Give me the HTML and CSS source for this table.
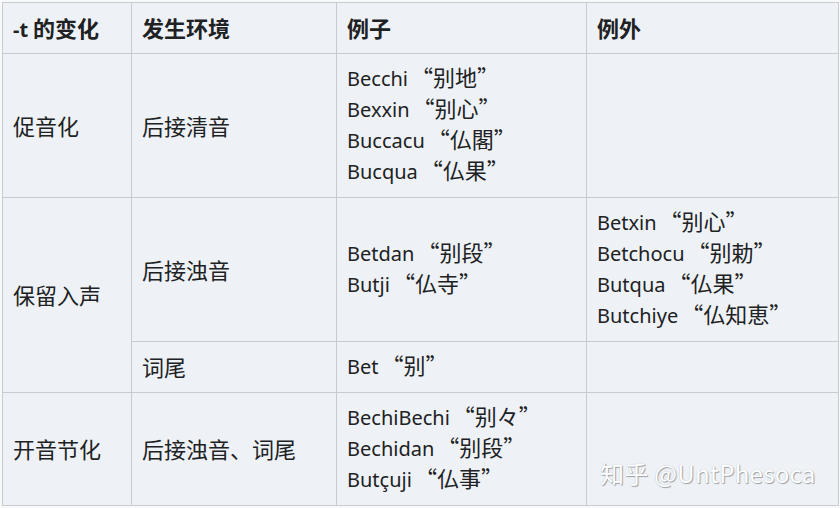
FILE: index.html
```html
<!DOCTYPE html>
<html lang="zh-CN">
<head>
<meta charset="utf-8">
<link rel="stylesheet" href="styles.css">
</head>
<body>
<div class="page">
<table class="tbl">
<colgroup>
<col class="c1"><col class="c2"><col class="c3"><col class="c4">
</colgroup>
<thead>
<tr><th><span class="lat">-t</span> 的变化</th><th>发生环境</th><th>例子</th><th>例外</th></tr>
</thead>
<tbody>
<tr>
<td>促音化</td>
<td>后接清音</td>
<td><div class="ln">Becchi<span class="zh">“别地”</span></div><div class="ln">Bexxin<span class="zh">“别心”</span></div><div class="ln">Buccacu<span class="zh">“仏閣”</span></div><div class="ln">Bucqua<span class="zh">“仏果”</span></div></td>
<td></td>
</tr>
<tr>
<td rowspan="2">保留入声</td>
<td>后接浊音</td>
<td><div class="ln">Betdan<span class="zh">“别段”</span></div><div class="ln">Butji<span class="zh">“仏寺”</span></div></td>
<td><div class="ln">Betxin<span class="zh">“别心”</span></div><div class="ln">Betchocu<span class="zh">“别勅”</span></div><div class="ln">Butqua<span class="zh">“仏果”</span></div><div class="ln">Butchiye<span class="zh">“仏知恵”</span></div></td>
</tr>
<tr>
<td>词尾</td>
<td><div class="ln">Bet<span class="zh">“别”</span></div></td>
<td></td>
</tr>
<tr>
<td>开音节化</td>
<td>后接浊音、词尾</td>
<td><div class="ln">BechiBechi<span class="zh">“别々”</span></div><div class="ln">Bechidan<span class="zh">“别段”</span></div><div class="ln">Butçuji<span class="zh">“仏事”</span></div></td>
<td></td>
</tr>
</tbody>
</table>
<div class="mark">知乎 @UntPhesoca</div>
</div>
</body>
</html>
```
FILE: styles.css
```css
html, body {
  margin: 0;
  padding: 0;
  background: #f8f9fb;
}
.page {
  position: relative;
  width: 840px;
  height: 508px;
  padding: 2px 0 0 2px;
  box-sizing: border-box;
  color: #202122;
}
.tbl {
  border-collapse: collapse;
  width: 836px;
  table-layout: fixed;
  background: #eef2f7;
  font-family: "Noto Sans CJK SC", sans-serif;
  font-size: 22px;
  line-height: 31px;
  text-spacing-trim: space-all;
}
.c1 { width: 129px; }
.c2 { width: 205px; }
.c3 { width: 250px; }
.c4 { width: 252px; }
.tbl th, .tbl td {
  border: 1px solid #c8ccd1;
  padding: 9px 10px 10px 10px;
  text-align: left;
  vertical-align: middle;
  font-weight: normal;
  white-space: nowrap;
}
.tbl th {
  font-weight: bold;
}
.lat {
  font-family: "Noto Sans", sans-serif;
  font-size: 20px;
  line-height: 10px;
}
.ln {
  height: 31px;
  line-height: 31px;
  font-family: "Noto Sans", sans-serif;
  font-size: 20px;
}
.zh {
  font-family: "Noto Sans CJK SC", sans-serif;
  font-size: 22px;
  line-height: 10px;
  margin-left: 3px;
}
.mark {
  position: absolute;
  left: 600px;
  top: 455px;
  font-family: "Noto Sans CJK SC", sans-serif;
  font-size: 24px;
  line-height: 36px;
  color: #ffffff;
  text-shadow: 1px 1px 1px #9aa0a6, 0 0 1px #b0b4ba;
  letter-spacing: 0.3px;
}
```
